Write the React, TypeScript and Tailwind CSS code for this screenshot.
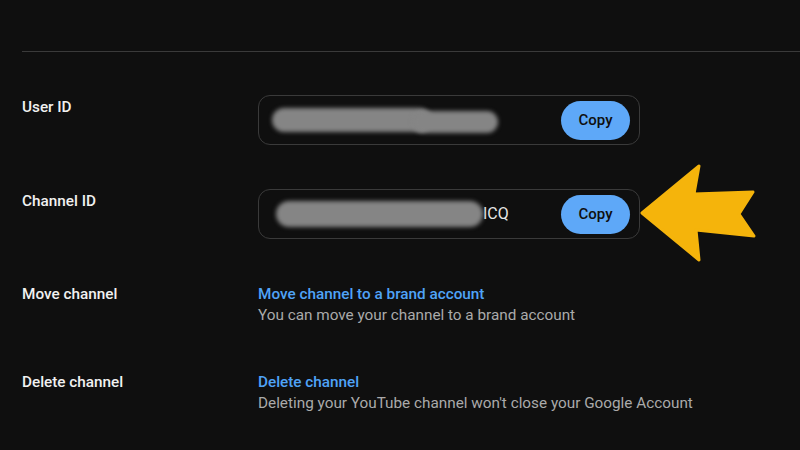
import React from 'react'

const font = { fontFamily: 'Roboto, "Liberation Sans", Arial, sans-serif' }

function Smudge({ className }: { className: string }) {
  return <div className={`rounded-full bg-[#858585] blur-[2px] ${className}`} />
}

function IdField({ children }: { children: React.ReactNode }) {
  return (
    <div className="flex items-center justify-between w-[382px] h-[50px] rounded-[12px] border border-[#3a3a3a] pl-[13px] pr-[9px]">
      <div className="flex items-center">{children}</div>
      <button className="w-[69px] h-[39px] rounded-full bg-[#5ea8f8] text-[#0f0f0f] text-[15px] font-medium">
        Copy
      </button>
    </div>
  )
}

function Label({ text }: { text: string }) {
  return <div className="w-[236px] shrink-0 pt-[2px] text-[15.3px] leading-[21px] font-medium text-[#f1f1f1]">{text}</div>
}

export default function App() {
  return (
    <div className="relative w-[800px] h-[450px] overflow-hidden bg-[#0f0f0f]" style={font}>
      {/* divider */}
      <div className="ml-[22px] mt-[51px] h-px bg-[#3a3a3a]" />

      <div className="pl-[22px]">
        <div className="flex mt-[43px]">
          <Label text="User ID" />
          <IdField>
            <div className="flex items-center">
              <Smudge className="w-[160px] h-[24px]" />
              <Smudge className="-ml-[20px] mt-[4px] w-[86px] h-[22px]" />
            </div>
          </IdField>
        </div>

        <div className="flex mt-[44px]">
          <Label text="Channel ID" />
          <IdField>
            <Smudge className="ml-[4px] w-[207px] h-[26px]" />
            <span className="text-[16px] text-[#e6e6e6]">ICQ</span>
          </IdField>
        </div>

        <div className="flex mt-[43px]">
          <Label text="Move channel" />
          <div className="pt-[2px] text-[15.3px] leading-[21px]">
            <div className="font-medium text-[#4fa3f7]">Move channel to a brand account</div>
            <div className="text-[#aaaaaa]">You can move your channel to a brand account</div>
          </div>
        </div>

        <div className="flex mt-[44px]">
          <Label text="Delete channel" />
          <div className="pt-[2px] text-[15.3px] leading-[21px]">
            <div className="font-medium text-[#4fa3f7]">Delete channel</div>
            <div className="text-[#aaaaaa]">Deleting your YouTube channel won't close your Google Account</div>
          </div>
        </div>
      </div>

      {/* arrow annotation */}
      <svg className="absolute left-[638px] top-[160px]" width="122" height="106" viewBox="0 0 122 106">
        <polygon
          points="4,53 61,6 56,34 115,32 101,54 116,76 58,70 61,100"
          fill="#f5b40b"
          stroke="#f5b40b"
          strokeWidth="3"
          strokeLinejoin="round"
        />
      </svg>
    </div>
  )
}
